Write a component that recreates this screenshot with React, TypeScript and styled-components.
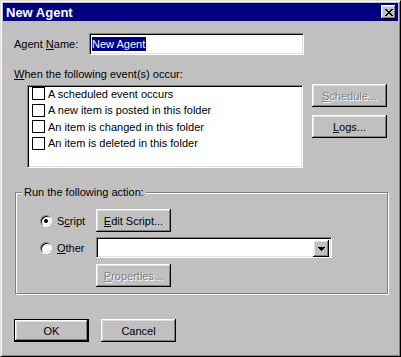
import React from "react"
import styled, { createGlobalStyle, css } from "styled-components"

const GlobalStyle = createGlobalStyle`
  html, body {
    margin: 0;
    padding: 0;
    background: #c0c0c0;
    overflow: hidden;
  }
`

const sunken = css`
  box-sizing: border-box;
  background: #fff;
  border-top: 1px solid #808080;
  border-left: 1px solid #808080;
  border-right: 1px solid #fff;
  border-bottom: 1px solid #fff;
  box-shadow: inset 1px 1px #000, inset -1px -1px #dfdfdf;
`

const raised = css`
  box-shadow: inset -1px -1px #000, inset 1px 1px #fff, inset -2px -2px #808080, inset 2px 2px #dfdfdf;
`

const Window = styled.div`
  width: 401px;
  height: 357px;
  box-sizing: border-box;
  background: #c0c0c0;
  border-top: 1px solid #dfdfdf;
  border-left: 1px solid #dfdfdf;
  border-right: 1px solid #000;
  border-bottom: 1px solid #000;
  box-shadow: inset 1px 1px #fff, inset -1px -1px #808080;
  padding: 2px;
  display: flex;
  flex-direction: column;
  font-family: "Liberation Sans", Arial, sans-serif;
  font-size: 11px;
  color: #000;
`

const TitleBar = styled.div`
  height: 18px;
  background: #000080;
  display: flex;
  align-items: center;
  justify-content: space-between;
  padding: 0 2px 0 3px;
  color: #fff;
  font-weight: bold;
  font-size: 13px;
`

const CloseButton = styled.div`
  width: 15px;
  height: 14px;
  background: #c0c0c0;
  display: flex;
  align-items: center;
  justify-content: center;
  ${raised}
`

const Body = styled.div`
  display: flex;
  flex-direction: column;
  padding: 12px 0 0 11px;
`

const FieldRow = styled.div`
  display: flex;
  align-items: center;
  height: 22px;
`

const FieldLabel = styled.span`
  width: 75px;
`

const TextField = styled.div`
  ${sunken}
  width: 215px;
  height: 22px;
  padding: 0 2px;
  display: flex;
  align-items: center;
`

const Selected = styled.span`
  background: #000080;
  color: #fff;
  line-height: 14px;
  padding-right: 1px;
`

const SectionLabel = styled.div`
  line-height: 13px;
  margin-top: 13px;
`

const ListRow = styled.div`
  display: flex;
  align-items: flex-start;
  gap: 9px;
  margin-top: 4px;
  padding-left: 13px;
`

const ListBox = styled.div`
  ${sunken}
  width: 276px;
  height: 83px;
  padding: 1px 0 0 4px;
  display: flex;
  flex-direction: column;
  gap: 3.67px;
`

const ListItem = styled.div`
  height: 13px;
  display: flex;
  align-items: center;
  gap: 3px;
  white-space: nowrap;
`

const CheckBox = styled.span`
  width: 13px;
  height: 13px;
  box-sizing: border-box;
  background: #fff;
  border: 1px solid #000;
  flex: none;
`

const ButtonColumn = styled.div`
  display: flex;
  flex-direction: column;
  gap: 8px;
  margin-top: -1px;
`

const Button = styled.button<{ $default?: boolean }>`
  width: 75px;
  height: 23px;
  box-sizing: border-box;
  padding: 0;
  border: none;
  background: #c0c0c0;
  font: inherit;
  color: ${(p) => (p.disabled ? "#808080" : "#000")};
  text-shadow: ${(p) => (p.disabled ? "1px 1px 0 #fff" : "none")};
  ${raised}
  ${(p) =>
    p.$default &&
    css`
      box-shadow: inset 0 0 0 1px #000, inset -2px -2px #000, inset 2px 2px #fff, inset -3px -3px #808080,
        inset 3px 3px #dfdfdf;
    `}
`

const GroupBox = styled.div`
  width: 373px;
  height: 102px;
  box-sizing: border-box;
  margin: 24px 0 0 1px;
  border: 1px solid #808080;
  box-shadow: inset 1px 1px #fff, 1px 1px #fff;
  display: flex;
  flex-direction: column;
`

const Caption = styled.span`
  align-self: flex-start;
  line-height: 13px;
  margin: -7px 0 0 6px;
  padding: 0 2px;
  background: #c0c0c0;
`

const ActionGrid = styled.div`
  display: grid;
  grid-template-columns: 56px auto;
  grid-template-rows: 23px 22px 23px;
  row-gap: 5px;
  justify-content: start;
  align-items: center;
  margin-top: 10px;
  padding-left: 24px;
`

const RadioLabel = styled.label`
  display: flex;
  align-items: center;
  gap: 5px;
`

const Radio = styled.span<{ $checked?: boolean }>`
  width: 12px;
  height: 12px;
  box-sizing: border-box;
  border-radius: 50%;
  background: #fff;
  border: 1px solid;
  border-color: #808080 #fff #fff #808080;
  box-shadow: inset 1px 1px #000, inset -1px -1px #dfdfdf;
  display: flex;
  align-items: center;
  justify-content: center;

  &::after {
    content: "";
    width: 4px;
    height: 4px;
    border-radius: 50%;
    background: #000;
    display: ${(p) => (p.$checked ? "block" : "none")};
  }
`

const ComboBox = styled.div`
  ${sunken}
  width: 236px;
  height: 21px;
  align-self: start;
  padding: 2px 2px 2px 0;
  display: flex;
  justify-content: flex-end;
`

const DropButton = styled.div`
  width: 16px;
  height: 17px;
  background: #c0c0c0;
  display: flex;
  align-items: center;
  justify-content: center;
  ${raised}
`

const Footer = styled.div`
  display: flex;
  gap: 12px;
  margin-top: 25px;
`

function CloseGlyph() {
  return (
    <svg width="8" height="7" viewBox="0 0 8 7" shapeRendering="crispEdges">
      <path
        fill="#000"
        d="M0 0h2v1H0z M6 0h2v1H6z M1 1h2v1H1z M5 1h2v1H5z M2 2h4v1H2z M3 3h2v1H3z M2 4h4v1H2z M1 5h2v1H1z M5 5h2v1H5z M0 6h2v1H0z M6 6h2v1H6z"
      />
    </svg>
  )
}

function DownArrow() {
  return (
    <svg width="7" height="4" viewBox="0 0 7 4" shapeRendering="crispEdges">
      <path fill="#000" d="M0 0h7v1H0z M1 1h5v1H1z M2 2h3v1H2z M3 3h1v1H3z" />
    </svg>
  )
}

const events = [
  "A scheduled event occurs",
  "A new item is posted in this folder",
  "An item is changed in this folder",
  "An item is deleted in this folder",
]

export default function App() {
  return (
    <>
      <GlobalStyle />
      <Window>
        <TitleBar>
          <span>New Agent</span>
          <CloseButton>
            <CloseGlyph />
          </CloseButton>
        </TitleBar>
        <Body>
          <FieldRow>
            <FieldLabel>
              Agent <u>N</u>ame:
            </FieldLabel>
            <TextField>
              <Selected>New Agent</Selected>
            </TextField>
          </FieldRow>

          <SectionLabel>
            <u>W</u>hen the following event(s) occur:
          </SectionLabel>
          <ListRow>
            <ListBox>
              {events.map((e) => (
                <ListItem key={e}>
                  <CheckBox />
                  {e}
                </ListItem>
              ))}
            </ListBox>
            <ButtonColumn>
              <Button disabled>
                <u>S</u>chedule...
              </Button>
              <Button>
                <u>L</u>ogs...
              </Button>
            </ButtonColumn>
          </ListRow>

          <GroupBox>
            <Caption>Run the following action:</Caption>
            <ActionGrid>
              <RadioLabel>
                <Radio $checked />
                <span>
                  S<u>c</u>ript
                </span>
              </RadioLabel>
              <Button>
                <u>E</u>dit Script...
              </Button>
              <RadioLabel>
                <Radio />
                <span>
                  <u>O</u>ther
                </span>
              </RadioLabel>
              <ComboBox>
                <DropButton>
                  <DownArrow />
                </DropButton>
              </ComboBox>
              <span />
              <Button disabled>
                <u>P</u>roperties...
              </Button>
            </ActionGrid>
          </GroupBox>

          <Footer>
            <Button $default>OK</Button>
            <Button>Cancel</Button>
          </Footer>
        </Body>
      </Window>
    </>
  )
}
